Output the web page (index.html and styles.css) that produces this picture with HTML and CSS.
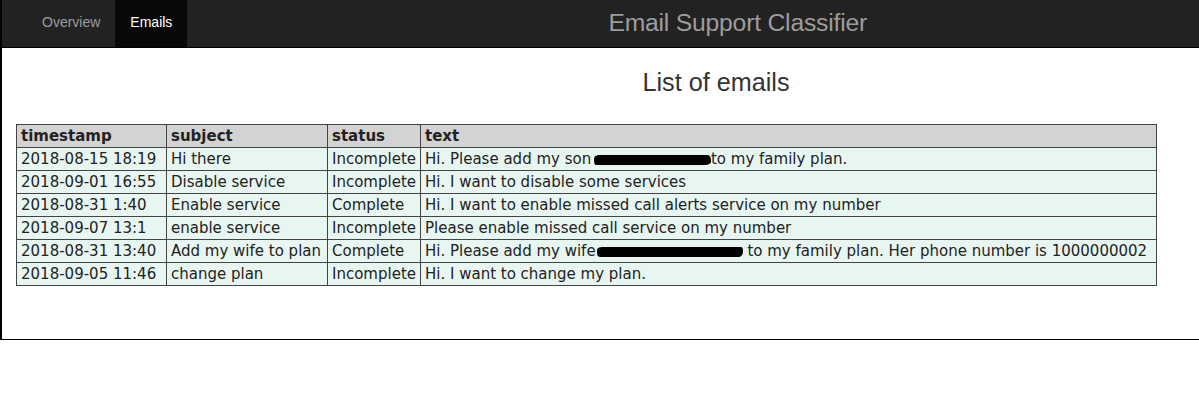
FILE: index.html
```html
<!DOCTYPE html>
<html>
<head>
<meta charset="utf-8">
<title>Email Support Classifier</title>
<link rel="stylesheet" href="styles.css">
</head>
<body>
<div class="frame">
  <nav class="navbar">
    <ul class="nav-tabs">
      <li class="tab">Overview</li>
      <li class="tab active">Emails</li>
    </ul>
    <div class="brand">Email Support Classifier</div>
  </nav>
  <main class="content">
    <h3 class="heading">List of emails</h3>
    <table class="emails">
      <colgroup>
        <col class="c-time">
        <col class="c-subject">
        <col class="c-status">
        <col class="c-text">
      </colgroup>
      <thead>
        <tr><th>timestamp</th><th>subject</th><th>status</th><th>text</th></tr>
      </thead>
      <tbody>
        <tr><td>2018-08-15 18:19</td><td>Hi there</td><td>Incomplete</td><td>Hi. Please add my son <span class="redact r1"></span>to my family plan.</td></tr>
        <tr><td>2018-09-01 16:55</td><td>Disable service</td><td>Incomplete</td><td>Hi. I want to disable some services</td></tr>
        <tr><td>2018-08-31 1:40</td><td>Enable service</td><td>Complete</td><td>Hi. I want to enable missed call alerts service on my number</td></tr>
        <tr><td>2018-09-07 13:1</td><td>enable service</td><td>Incomplete</td><td>Please enable missed call service on my number</td></tr>
        <tr><td>2018-08-31 13:40</td><td>Add my wife to plan</td><td>Complete</td><td>Hi. Please add my wife<span class="redact r2"></span> to my family plan. Her phone number is 1000000002</td></tr>
        <tr><td>2018-09-05 11:46</td><td>change plan</td><td>Incomplete</td><td>Hi. I want to change my plan.</td></tr>
      </tbody>
    </table>
  </main>
</div>
</body>
</html>
```
FILE: styles.css
```css
html, body {
  margin: 0;
  padding: 0;
  background: #fff;
}
.frame {
  box-sizing: border-box;
  width: 1199px;
  height: 340px;
  border-left: 2px solid #000;
  border-bottom: 1px solid #000;
  font-family: "Liberation Sans", Arial, sans-serif;
}
.navbar {
  display: flex;
  align-items: stretch;
  height: 47px;
  background: #222;
  border-bottom: 1px solid #000;
}
.nav-tabs {
  display: flex;
  list-style: none;
  margin: 0 0 0 25px;
  padding: 0;
}
.tab {
  padding: 0 15px;
  line-height: 45px;
  font-size: 14px;
  color: #9d9d9d;
}
.tab.active {
  background: #080808;
  color: #fff;
}
.brand {
  margin-left: 421px;
  font-size: 24.7px;
  line-height: 45px;
  color: #9d9d9d;
  letter-spacing: -0.2px;
}
.content {
  padding: 0 0 0 14px;
}
.heading {
  margin: 20px 0 0 0;
  padding-left: 217px;
  text-align: center;
  font-size: 25.2px;
  font-weight: normal;
  line-height: 28px;
  color: #333;
  height: 56px;
}
.emails {
  border-collapse: collapse;
  table-layout: fixed;
  width: 1140px;
  font-family: "DejaVu Sans", Verdana, sans-serif;
  font-size: 15px;
  color: #222;
}
.c-time { width: 150px; }
.c-subject { width: 161px; }
.c-status { width: 93px; }
.c-text { width: 736px; }
.emails th, .emails td {
  border: 1px solid #444;
  padding: 2px 4px 2px 4px;
  line-height: 18px;
  text-align: left;
  white-space: nowrap;
  overflow: hidden;
}
.emails th {
  background: #d3d3d3;
  font-weight: bold;
}
.emails td {
  background: #e8f6f1;
}
.redact {
  display: inline-block;
  vertical-align: -1px;
  height: 10px;
  background: #000;
}
.r1 {
  width: 117px;
  border-radius: 5px 3px 6px 2px / 4px 6px 3px 5px;
  margin-left: -2px;
}
.r2 {
  width: 146px;
  border-radius: 6px 2px 5px 4px / 3px 5px 6px 4px;
  margin-left: 1px;
}
```
